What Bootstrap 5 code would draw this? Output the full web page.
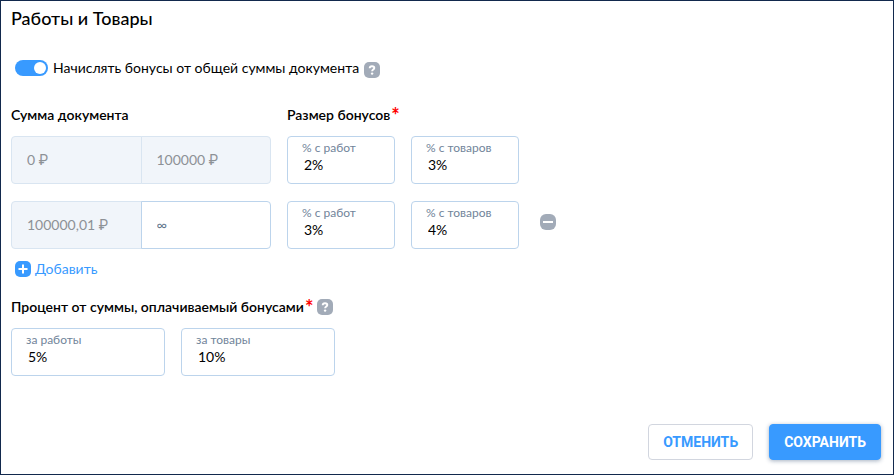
<!DOCTYPE html>
<html lang="ru">
<head>
<meta charset="utf-8">
<meta name="viewport" content="width=device-width, initial-scale=1">
<title>Работы и Товары</title>
<link href="https://cdn.jsdelivr.net/npm/bootstrap@5.3.0/dist/css/bootstrap.min.css" rel="stylesheet">
<style>
  body { font-family: "Lato", "Roboto", "Liberation Sans", sans-serif; font-size: 14px; line-height: 20px; color: #000; background: #fff; }
  .bonus-form { border: 1px solid #12294d; padding: 5px 12px 14px 10px; }
  .form-title { font-size: 18px; line-height: 24px; font-weight: 500; }
  .total-switch { margin: 26px 0 25px 4px; min-height: 24px; gap: 5px; }
  .total-switch .form-check-input { width: 33px; height: 16px; margin: 0; border: 0; float: none; background-color: #389aff; background-size: 16px; }
  .head-text { font-weight: 600; line-height: 20px; }
  .range-col { width: 260px; }
  .range-col .form-control { height: 48px; border-color: #bcd4ec; border-radius: 4px; padding: 0 15px 2px; font-size: 14px; color: #63758c; }
  .range-col .form-control::placeholder { color: #63758c; opacity: 1; }
  .range-col .form-control:disabled { background: #f1f5fa; border-color: #d9e5f1; color: #8d9196; }
  .range-col .form-control:focus { z-index: auto; }
  .percent { height: 48px; border: 1px solid #bcd4ec; border-radius: 4px; padding: 3px 14px 0; }
  .percent label { font-size: 12px; line-height: 16px; color: #71849a; }
  .percent input { border: 0; outline: 0; padding: 0 2px; width: 100%; height: 18px; font-size: 14px; line-height: 18px; color: #000; background: transparent; }
  .percent-sm { width: 108px; }
  .percent-lg { width: 154px; }
  .rows-gap { gap: 17px; }
  .rows-top { margin-top: 11px; }
  .star { color: #f00; font-size: 20px; line-height: 20px; font-weight: 700; margin-left: 1px; }
  .icon-btn { border: 0; padding: 0; background: none; line-height: 0; }
  .remove-btn { margin-left: 5px; padding-bottom: 6px; }
  .add-link { color: #389aff; gap: 4px; margin: 10px 0 0 4px; }
  .share-head { margin: 18px 0 11px; }
  .action { height: 36px; font-family: "Roboto", "Liberation Sans", sans-serif; font-size: 14px; line-height: 20px; font-weight: 700; border-radius: 4px; padding: 0 14px; }
  .action-cancel { color: #389aff; border: 1px solid #d2d6df; background: #fff; }
  .action-save { color: #fff; border: 1px solid #389aff; background: #389aff; box-shadow: 0 1px 4px rgba(30, 60, 100, .4); }
</style>
</head>
<body>
<svg class="d-none" aria-hidden="true">
  <symbol id="help" viewBox="0 0 16 16">
    <rect width="16" height="16" rx="5" fill="#a2abb8"/>
    <path d="M5.7 6.2C5.7 4.7 6.8 4.2 8 4.2S10.3 4.9 10.3 6C10.3 7.5 8.1 7.6 8.1 9.3" fill="none" stroke="#fff" stroke-width="1.9"/>
    <circle cx="8.1" cy="11.6" r="1.2" fill="#fff"/>
  </symbol>
</svg>
<form class="bonus-form min-vh-100 d-flex flex-column">
  <h1 class="form-title mb-0">Работы и Товары</h1>

  <div class="total-switch form-check form-switch d-flex align-items-center p-0">
    <input class="form-check-input" type="checkbox" role="switch" id="total" checked>
    <label class="form-check-label" for="total">Начислять бонусы от общей суммы документа</label>
    <button class="icon-btn mt-1" type="button" aria-label="Справка о начислении"><svg width="16" height="16"><use href="#help"/></svg></button>
  </div>

  <div class="d-flex gap-3">
    <div class="range-col head-text">Сумма документа</div>
    <div class="head-text d-flex">Размер бонусов<span class="star">*</span></div>
  </div>

  <div class="rows-top d-flex flex-column rows-gap">
    <div class="d-flex gap-3">
      <div class="range-col input-group">
        <input class="form-control" type="text" value="0 ₽" aria-label="Сумма от" disabled>
        <input class="form-control" type="text" value="100000 ₽" aria-label="Сумма до" disabled>
      </div>
      <div class="percent percent-sm"><label class="d-block" for="w1">% с работ</label><input class="d-block" type="text" id="w1" value="2%"></div>
      <div class="percent percent-sm"><label class="d-block" for="g1">% с товаров</label><input class="d-block" type="text" id="g1" value="3%"></div>
    </div>
    <div class="d-flex gap-3">
      <div class="range-col input-group">
        <input class="form-control" type="text" value="100000,01 ₽" aria-label="Сумма от" disabled>
        <input class="form-control" type="text" placeholder="∞" aria-label="Сумма до">
      </div>
      <div class="percent percent-sm"><label class="d-block" for="w2">% с работ</label><input class="d-block" type="text" id="w2" value="3%"></div>
      <div class="percent percent-sm"><label class="d-block" for="g2">% с товаров</label><input class="d-block" type="text" id="g2" value="4%"></div>
      <button class="icon-btn remove-btn" type="button" aria-label="Удалить строку"><svg width="16" height="16" viewBox="0 0 16 16"><rect width="16" height="16" rx="6" fill="#a2abb8"/><path d="M3 8H13" stroke="#fff" stroke-width="2"/></svg></button>
    </div>
  </div>

  <a class="add-link d-flex align-items-center align-self-start text-decoration-none" href="#">
    <svg width="16" height="16" viewBox="0 0 16 16"><rect width="16" height="16" rx="5" fill="#389aff"/><path d="M3.5 8H12.5M8 3.5V12.5" stroke="#fff" stroke-width="2"/></svg>
    Добавить
  </a>

  <div class="share-head head-text d-flex align-items-center">
    <span>Процент от суммы, оплачиваемый бонусами</span><span class="star">*</span>
    <button class="icon-btn ms-1" type="button" aria-label="Справка об оплате"><svg width="16" height="16"><use href="#help"/></svg></button>
  </div>
  <div class="d-flex gap-3">
    <div class="percent percent-lg"><label class="d-block" for="pw">за работы</label><input class="d-block" type="text" id="pw" value="5%"></div>
    <div class="percent percent-lg"><label class="d-block" for="pg">за товары</label><input class="d-block" type="text" id="pg" value="10%"></div>
  </div>

  <div class="d-flex justify-content-end gap-3 mt-auto">
    <button class="btn action action-cancel" type="button">ОТМЕНИТЬ</button>
    <button class="btn action action-save" type="submit">СОХРАНИТЬ</button>
  </div>
</form>
<script src="https://cdn.jsdelivr.net/npm/bootstrap@5.3.0/dist/js/bootstrap.bundle.min.js"></script>
</body>
</html>
